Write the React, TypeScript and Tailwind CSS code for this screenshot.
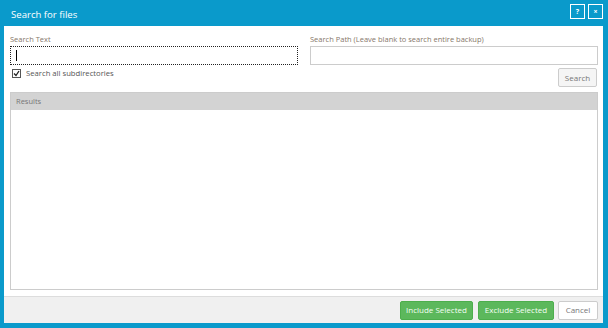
import React from "react";

export default function App() {
  return (
    <div
      className="w-[608px] h-[328px] bg-[#0a9acb] flex flex-col pl-[4px] pr-[5px] pb-[5px]"
      style={{ fontFamily: '"Open Sans", "Noto Sans", sans-serif' }}
    >
      <div className="h-[26px] flex items-start justify-between pl-[7px] shrink-0">
        <span className="text-white text-[9.6px] leading-none mt-[10px]">Search for files</span>
        <div className="flex gap-[3px] mt-[4px]">
          <div className="w-[15px] h-[15px] border border-white flex items-center justify-center">
            <span className="text-white text-[7px] font-bold leading-none">?</span>
          </div>
          <div className="w-[15px] h-[15px] border border-white flex items-center justify-center">
            <span className="text-white text-[7px] font-bold leading-none">×</span>
          </div>
        </div>
      </div>
      <div className="flex-1 flex flex-col bg-white">
        <div className="flex-1 flex flex-col pl-[6px] pr-[5px] pt-[8px] pb-[6px]">
          <div className="flex gap-[12px]">
            <div className="flex-1 flex flex-col">
              <label className="text-[7.5px] text-[#86776a] leading-[10px] mb-[2px]">Search Text</label>
              <div className="h-[19px] border border-dotted border-[#222] bg-white flex items-center pl-[5px]">
                <div className="w-[1px] h-[11px] bg-black" />
              </div>
              <div className="flex items-center gap-[5px] mt-[4px] pl-[2px]">
                <div className="w-[9px] h-[9px] border border-[#555] bg-white flex items-center justify-center">
                  <svg width="7" height="7" viewBox="0 0 7 7">
                    <path d="M1 3.5 L3 5.5 L6 1" stroke="#222" strokeWidth="1.3" fill="none" />
                  </svg>
                </div>
                <span className="text-[7.7px] text-[#555] leading-none">Search all subdirectories</span>
              </div>
            </div>
            <div className="flex-1 flex flex-col">
              <label className="text-[7.5px] text-[#86776a] leading-[10px] mb-[2px]">
                Search Path (Leave blank to search entire backup)
              </label>
              <div className="h-[19px] border border-[#ccc] bg-white" />
              <div className="flex justify-end mt-[3px] pr-[1px]">
                <button className="h-[19px] w-[39px] border border-[#ccc] bg-[#f5f5f5] text-[8px] text-[#777] rounded-[2px]">
                  Search
                </button>
              </div>
            </div>
          </div>
          <div className="flex-1 flex flex-col mt-[5px] border border-[#ccc]">
            <div className="h-[17px] bg-[#d3d3d3] flex items-center pl-[5px]">
              <span className="text-[7.5px] text-[#777]">Results</span>
            </div>
            <div className="flex-1 bg-white" />
          </div>
        </div>
        <div className="h-[27px] bg-[#f0f0f0] border-t border-[#ddd] flex items-center justify-end pr-[5px] shrink-0">
          <button className="h-[19px] w-[73px] bg-[#5cb85c] border border-[#4cae4c] text-[#f4fff4] text-[8px] rounded-[2px]">
            Include Selected
          </button>
          <button className="h-[19px] w-[76px] ml-[5px] bg-[#5cb85c] border border-[#4cae4c] text-[#f4fff4] text-[8px] rounded-[2px]">
            Exclude Selected
          </button>
          <button className="h-[19px] w-[40px] ml-[4px] bg-white border border-[#ccc] text-[#777] text-[8px] rounded-[2px]">
            Cancel
          </button>
        </div>
      </div>
    </div>
  );
}
